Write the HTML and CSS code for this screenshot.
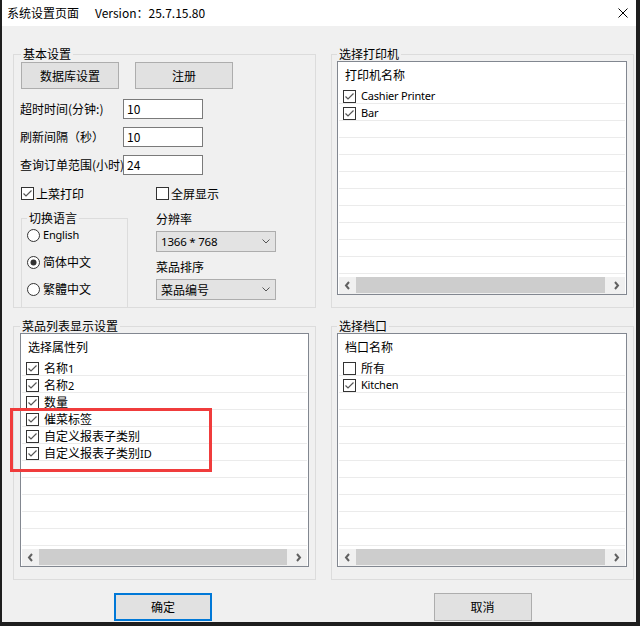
FILE: index.html
```html
<!DOCTYPE html>
<html lang="zh-CN">
<head>
<meta charset="utf-8">
<title>系统设置页面</title>
<link rel="stylesheet" href="styles.css">
</head>
<body>
<div class="window">
  <div class="titlebar">
    <span class="title">系统设置页面</span>
    <span class="version">Version：25.7.15.80</span>
    <svg class="close" width="10" height="10" viewBox="0 0 10 10"><path d="M0.5 0.5L9.5 9.5M9.5 0.5L0.5 9.5" stroke="#000" stroke-width="1"/></svg>
  </div>

  <div class="content">
    <div class="groups">
      <!-- 基本设置 -->
      <section class="group basic">
        <div class="group-title">基本设置</div>
        <div class="btn-row">
          <div class="btn">数据库设置</div>
          <div class="btn">注册</div>
        </div>
        <div class="field-row first"><span class="field-label">超时时间(分钟:)</span><span class="input">10</span></div>
        <div class="field-row"><span class="field-label">刷新间隔（秒）</span><span class="input">10</span></div>
        <div class="field-row"><span class="field-label">查询订单范围(小时)</span><span class="input">24</span></div>
        <div class="lower">
          <div class="check">
            <svg class="cb" width="13" height="13" viewBox="0 0 13 13"><rect x="0.5" y="0.5" width="12" height="12" fill="#fff" stroke="#333"/><path d="M2.5 6.5L5 9L10.5 3.5" fill="none" stroke="#555" stroke-width="1.2"/></svg>
            <span>上菜打印</span>
          </div>
          <div class="check">
            <svg class="cb" width="13" height="13" viewBox="0 0 13 13"><rect x="0.5" y="0.5" width="12" height="12" fill="#fff" stroke="#333"/></svg>
            <span>全屏显示</span>
          </div>
          <div class="subgroup">
            <div class="group-title">切换语言</div>
            <div class="radio">
              <svg width="13" height="13" viewBox="0 0 13 13"><circle cx="6.5" cy="6.5" r="6" fill="#fff" stroke="#333"/></svg>
              <span class="latin">English</span>
            </div>
            <div class="radio">
              <svg width="13" height="13" viewBox="0 0 13 13"><circle cx="6.5" cy="6.5" r="6" fill="#fff" stroke="#333"/><circle cx="6.5" cy="6.5" r="3" fill="#333"/></svg>
              <span>简体中文</span>
            </div>
            <div class="radio">
              <svg width="13" height="13" viewBox="0 0 13 13"><circle cx="6.5" cy="6.5" r="6" fill="#fff" stroke="#333"/></svg>
              <span>繁體中文</span>
            </div>
          </div>
          <div class="selects">
            <div class="sel-label">分辨率</div>
            <div class="select"><span class="latin-sel">1366 * 768</span><svg class="chev" width="8" height="5" viewBox="0 0 8 5"><path d="M0.5 0.5L4 4L7.5 0.5" fill="none" stroke="#555"/></svg></div>
            <div class="sel-label">菜品排序</div>
            <div class="select"><span>菜品编号</span><svg class="chev" width="8" height="5" viewBox="0 0 8 5"><path d="M0.5 0.5L4 4L7.5 0.5" fill="none" stroke="#555"/></svg></div>
          </div>
        </div>
      </section>

      <!-- 选择打印机 -->
      <section class="group list-group narrow">
        <div class="group-title">选择打印机</div>
        <div class="listbox">
          <div class="list-head">打印机名称</div>
          <div class="list-rows">
            <div class="list-row"><svg class="cb" width="13" height="13" viewBox="0 0 13 13"><rect x="0.5" y="0.5" width="12" height="12" fill="#fff" stroke="#333"/><path d="M2.5 6.5L5 9L10.5 3.5" fill="none" stroke="#555" stroke-width="1.2"/></svg><span class="latin">Cashier Printer</span></div>
            <div class="list-row"><svg class="cb" width="13" height="13" viewBox="0 0 13 13"><rect x="0.5" y="0.5" width="12" height="12" fill="#fff" stroke="#333"/><path d="M2.5 6.5L5 9L10.5 3.5" fill="none" stroke="#555" stroke-width="1.2"/></svg><span class="latin">Bar</span></div>
            <div class="list-row"></div><div class="list-row"></div><div class="list-row"></div><div class="list-row"></div><div class="list-row"></div><div class="list-row"></div><div class="list-row"></div><div class="list-row"></div><div class="list-row"></div><div class="list-row"></div>
          </div>
          <div class="hscroll">
            <span class="arrow"><svg width="7" height="9" viewBox="0 0 7 9"><path d="M5 1L2 4.5L5 8" fill="none" stroke="#606060" stroke-width="2"/></svg></span>
            <span class="thumb"></span>
            <span class="arrow"><svg width="7" height="9" viewBox="0 0 7 9"><path d="M2 1L5 4.5L2 8" fill="none" stroke="#606060" stroke-width="2"/></svg></span>
          </div>
        </div>
      </section>

      <!-- 菜品列表显示设置 -->
      <section class="group list-group">
        <div class="group-title">菜品列表显示设置</div>
        <div class="listbox">
          <div class="list-head">选择属性列</div>
          <div class="list-rows">
            <div class="list-row"><svg class="cb" width="13" height="13" viewBox="0 0 13 13"><rect x="0.5" y="0.5" width="12" height="12" fill="#fff" stroke="#333"/><path d="M2.5 6.5L5 9L10.5 3.5" fill="none" stroke="#555" stroke-width="1.2"/></svg><span>名称<span class="num">1</span></span></div>
            <div class="list-row"><svg class="cb" width="13" height="13" viewBox="0 0 13 13"><rect x="0.5" y="0.5" width="12" height="12" fill="#fff" stroke="#333"/><path d="M2.5 6.5L5 9L10.5 3.5" fill="none" stroke="#555" stroke-width="1.2"/></svg><span>名称<span class="num">2</span></span></div>
            <div class="list-row"><svg class="cb" width="13" height="13" viewBox="0 0 13 13"><rect x="0.5" y="0.5" width="12" height="12" fill="#fff" stroke="#333"/><path d="M2.5 6.5L5 9L10.5 3.5" fill="none" stroke="#555" stroke-width="1.2"/></svg><span>数量</span></div>
            <div class="list-row"><svg class="cb" width="13" height="13" viewBox="0 0 13 13"><rect x="0.5" y="0.5" width="12" height="12" fill="#fff" stroke="#333"/><path d="M2.5 6.5L5 9L10.5 3.5" fill="none" stroke="#555" stroke-width="1.2"/></svg><span>催菜标签</span></div>
            <div class="list-row"><svg class="cb" width="13" height="13" viewBox="0 0 13 13"><rect x="0.5" y="0.5" width="12" height="12" fill="#fff" stroke="#333"/><path d="M2.5 6.5L5 9L10.5 3.5" fill="none" stroke="#555" stroke-width="1.2"/></svg><span>自定义报表子类别</span></div>
            <div class="list-row"><svg class="cb" width="13" height="13" viewBox="0 0 13 13"><rect x="0.5" y="0.5" width="12" height="12" fill="#fff" stroke="#333"/><path d="M2.5 6.5L5 9L10.5 3.5" fill="none" stroke="#555" stroke-width="1.2"/></svg><span>自定义报表子类别<span class="num">ID</span></span></div>
            <div class="list-row"></div><div class="list-row"></div><div class="list-row"></div><div class="list-row"></div><div class="list-row"></div><div class="list-row"></div><div class="list-row"></div>
          </div>
          <div class="hscroll">
            <span class="arrow"><svg width="7" height="9" viewBox="0 0 7 9"><path d="M5 1L2 4.5L5 8" fill="none" stroke="#606060" stroke-width="2"/></svg></span>
            <span class="thumb"></span>
            <span class="arrow"><svg width="7" height="9" viewBox="0 0 7 9"><path d="M2 1L5 4.5L2 8" fill="none" stroke="#606060" stroke-width="2"/></svg></span>
          </div>
        </div>
      </section>

      <!-- 选择档口 -->
      <section class="group list-group narrow">
        <div class="group-title">选择档口</div>
        <div class="listbox">
          <div class="list-head">档口名称</div>
          <div class="list-rows">
            <div class="list-row"><svg class="cb" width="13" height="13" viewBox="0 0 13 13"><rect x="0.5" y="0.5" width="12" height="12" fill="#fff" stroke="#333"/></svg><span>所有</span></div>
            <div class="list-row"><svg class="cb" width="13" height="13" viewBox="0 0 13 13"><rect x="0.5" y="0.5" width="12" height="12" fill="#fff" stroke="#333"/><path d="M2.5 6.5L5 9L10.5 3.5" fill="none" stroke="#555" stroke-width="1.2"/></svg><span class="latin">Kitchen</span></div>
            <div class="list-row"></div><div class="list-row"></div><div class="list-row"></div><div class="list-row"></div><div class="list-row"></div><div class="list-row"></div><div class="list-row"></div><div class="list-row"></div><div class="list-row"></div><div class="list-row"></div><div class="list-row"></div>
          </div>
          <div class="hscroll">
            <span class="arrow"><svg width="7" height="9" viewBox="0 0 7 9"><path d="M5 1L2 4.5L5 8" fill="none" stroke="#606060" stroke-width="2"/></svg></span>
            <span class="thumb"></span>
            <span class="arrow"><svg width="7" height="9" viewBox="0 0 7 9"><path d="M2 1L5 4.5L2 8" fill="none" stroke="#606060" stroke-width="2"/></svg></span>
          </div>
        </div>
      </section>
    </div>

    <div class="actions">
      <div class="btn primary">确定</div>
      <div class="btn">取消</div>
    </div>
  </div>

  <div class="highlight"></div>
</div>
</body>
</html>
```

FILE: styles.css
```css
* { box-sizing: border-box; }

html, body {
  margin: 0;
  padding: 0;
}

body {
  width: 640px;
  height: 626px;
  overflow: hidden;
  background: #1e1e1e;
  font-family: "Noto Sans CJK SC", "Noto Sans", sans-serif;
  font-size: 12px;
  color: #000;
}

.window {
  position: relative;
  margin-left: 2px;
  width: 634px;
  height: 622px;
  background: #f0f0f0;
  overflow: hidden;
}

/* title bar */
.titlebar {
  height: 26px;
  background: #fff;
  display: flex;
  align-items: center;
  padding: 0 8px 0 5px;
  line-height: 16px;
  font-size: 12px;
}
.version { margin-left: 16px; }
.close { margin-left: auto; }

/* content */
.content {
  padding: 28px 0 0 11px;
}

.groups {
  display: grid;
  grid-template-columns: 303px 303px;
  grid-template-rows: 254px 254px;
  column-gap: 15px;
  row-gap: 18px;
}

.group {
  border: 1px solid #dcdcdc;
  display: flex;
  flex-direction: column;
  min-height: 0;
  padding: 0 6px 12px 6px;
}

.group-title {
  align-self: flex-start;
  margin-top: -10px;
  padding: 0 2px;
  height: 17px;
  line-height: 17px;
  background: #f0f0f0;
  white-space: nowrap;
}

/* basic settings */
.group.basic {
  padding: 0 6px 0 7px;
}

.btn-row {
  display: flex;
  gap: 16px;
}

.btn {
  width: 98px;
  height: 27px;
  background: #e1e1e1;
  border: 1px solid #adadad;
  display: flex;
  align-items: center;
  justify-content: center;
  line-height: 16px;
}

.field-row {
  display: flex;
  align-items: center;
  height: 20px;
  margin-top: 8px;
}
.field-row.first { margin-top: 10px; }

.field-label {
  width: 102px;
  margin-left: -1px;
  margin-right: 1px;
  white-space: nowrap;
  line-height: 16px;
  position: relative;
  z-index: 1;
}

.input {
  width: 80px;
  height: 20px;
  border: 1px solid #7a7a7a;
  background: #fff;
  padding-left: 3px;
  line-height: 18px;
  font-size: 12px;
}

.lower {
  flex: 1;
  margin-top: 10px;
  display: grid;
  grid-template-columns: 107px 1fr;
  grid-template-rows: 17px 1fr;
  column-gap: 28px;
  min-height: 0;
}

.check {
  display: flex;
  align-items: center;
  gap: 2px;
  line-height: 17px;
}
.check .cb { flex: none; }

.subgroup {
  margin-top: 16px;
  border: 1px solid #dcdcdc;
  border-bottom: none;
  padding-left: 5px;
  display: flex;
  flex-direction: column;
}

.radio {
  display: flex;
  align-items: center;
  gap: 3px;
  height: 18px;
  line-height: 18px;
}
.radio + .radio { margin-top: 9px; }
.radio svg { flex: none; }

.latin {
  font-family: "Noto Sans", "Liberation Sans", sans-serif;
  font-size: 11px;
  letter-spacing: -0.2px;
}

.selects {
  display: flex;
  flex-direction: column;
}

.sel-label {
  height: 17px;
  line-height: 17px;
  margin-top: 8px;
}
.sel-label + .select { margin-top: 4px; }
.select + .sel-label { margin-top: 6px; }

.select {
  width: 120px;
  height: 21px;
  background: #e3e3e3;
  border: 1px solid #adadad;
  display: flex;
  align-items: center;
  padding: 0 5px 0 4px;
  line-height: 17px;
}
.latin-sel {
  font-family: "Noto Sans", "Liberation Sans", sans-serif;
  font-size: 11.5px;
  letter-spacing: -0.2px;
}
.chev { margin-left: auto; }

/* list groups */
.group.list-group.narrow {
  padding-left: 5px;
}

.listbox {
  flex: 1;
  margin-top: -1px;
  min-height: 0;
  border: 1px solid #828790;
  background: #fff;
  padding: 0 1px;
  display: flex;
  flex-direction: column;
}

.list-head {
  height: 25px;
  line-height: 25px;
  padding-left: 6px;
  flex: none;
}

.list-rows {
  flex: 1;
  min-height: 0;
  overflow: hidden;
}

.list-row {
  height: 17px;
  border-bottom: 1px solid #ebebeb;
  padding: 2px 0 0 4px;
  display: flex;
  align-items: center;
  gap: 5px;
  line-height: 14px;
}
.list-row .cb { flex: none; }

.num {
  font-family: "Noto Sans", "Liberation Sans", sans-serif;
  font-size: 11px;
}

.hscroll {
  flex: none;
  height: 17px;
  background: #f0f0f0;
  display: grid;
  grid-template-columns: 17px 1fr 17px;
}

.arrow {
  display: flex;
  align-items: center;
  justify-content: center;
}

.thumb {
  background: #cdcdcd;
  margin: 0 3px 1px 0;
}

/* bottom buttons */
.actions {
  display: grid;
  grid-template-columns: 303px 303px;
  column-gap: 15px;
  justify-items: center;
  margin-top: 13px;
}
.actions .btn {
  height: 28px;
}
.actions .btn.primary {
  border: 2px solid #0078d7;
  margin-right: 3px;
}

/* annotation overlay */
.highlight {
  position: absolute;
  left: 8px;
  top: 408px;
  width: 202px;
  height: 64px;
  border: 3px solid #f03c3c;
  pointer-events: none;
}
```
